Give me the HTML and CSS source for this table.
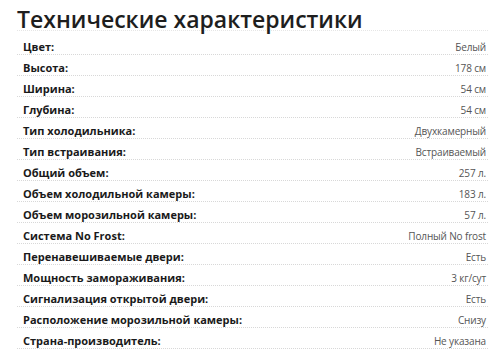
FILE: index.html
```html
<!DOCTYPE html>
<html lang="ru">
<head>
<meta charset="utf-8">
<link rel="stylesheet" href="styles.css">
</head>
<body>
<div class="specs">
  <h2 class="specs-title">Технические характеристики</h2>
  <div class="specs-list">
    <div class="row"><span class="label">Цвет:</span><span class="value">Белый</span></div>
    <div class="row"><span class="label">Высота:</span><span class="value">178 см</span></div>
    <div class="row"><span class="label">Ширина:</span><span class="value">54 см</span></div>
    <div class="row"><span class="label">Глубина:</span><span class="value">54 см</span></div>
    <div class="row"><span class="label">Тип холодильника:</span><span class="value">Двухкамерный</span></div>
    <div class="row"><span class="label">Тип встраивания:</span><span class="value">Встраиваемый</span></div>
    <div class="row"><span class="label">Общий объем:</span><span class="value">257 л.</span></div>
    <div class="row"><span class="label">Объем холодильной камеры:</span><span class="value">183 л.</span></div>
    <div class="row"><span class="label">Объем морозильной камеры:</span><span class="value">57 л.</span></div>
    <div class="row"><span class="label">Система No Frost:</span><span class="value">Полный No frost</span></div>
    <div class="row"><span class="label">Перенавешиваемые двери:</span><span class="value">Есть</span></div>
    <div class="row"><span class="label">Мощность замораживания:</span><span class="value">3 кг/сут</span></div>
    <div class="row"><span class="label">Сигнализация открытой двери:</span><span class="value">Есть</span></div>
    <div class="row"><span class="label">Расположение морозильной камеры:</span><span class="value">Снизу</span></div>
    <div class="row"><span class="label">Страна-производитель:</span><span class="value">Не указана</span></div>
  </div>
</div>
</body>
</html>
```
FILE: styles.css
```css
html, body {
  margin: 0;
  padding: 0;
  background: #fff;
}
body {
  font-family: "Open Sans", "Noto Sans", "Liberation Sans", sans-serif;
  color: #222;
}
.specs {
  padding: 5px 12px 0 17px;
}
.specs-title {
  margin: 0;
  font-size: 23px;
  font-weight: 600;
  line-height: 29px;
  color: #1e1e1e;
  letter-spacing: 0;
}
.specs-list {
  border-top: 1px dotted #e6e6e6;
  margin-top: -4px;
}
.row {
  display: flex;
  justify-content: space-between;
  align-items: flex-end;
  height: 20px;
  padding: 0 2px 0 6px;
  border-bottom: 1px dotted #d8d8d8;
  line-height: 14px;
}
.row:first-child {
  height: 23px;
}
.label {
  font-size: 11px;
  font-weight: 700;
  color: #1a1a1a;
}
.value {
  font-size: 10px;
  color: #555;
  letter-spacing: -0.15px;
}
```
